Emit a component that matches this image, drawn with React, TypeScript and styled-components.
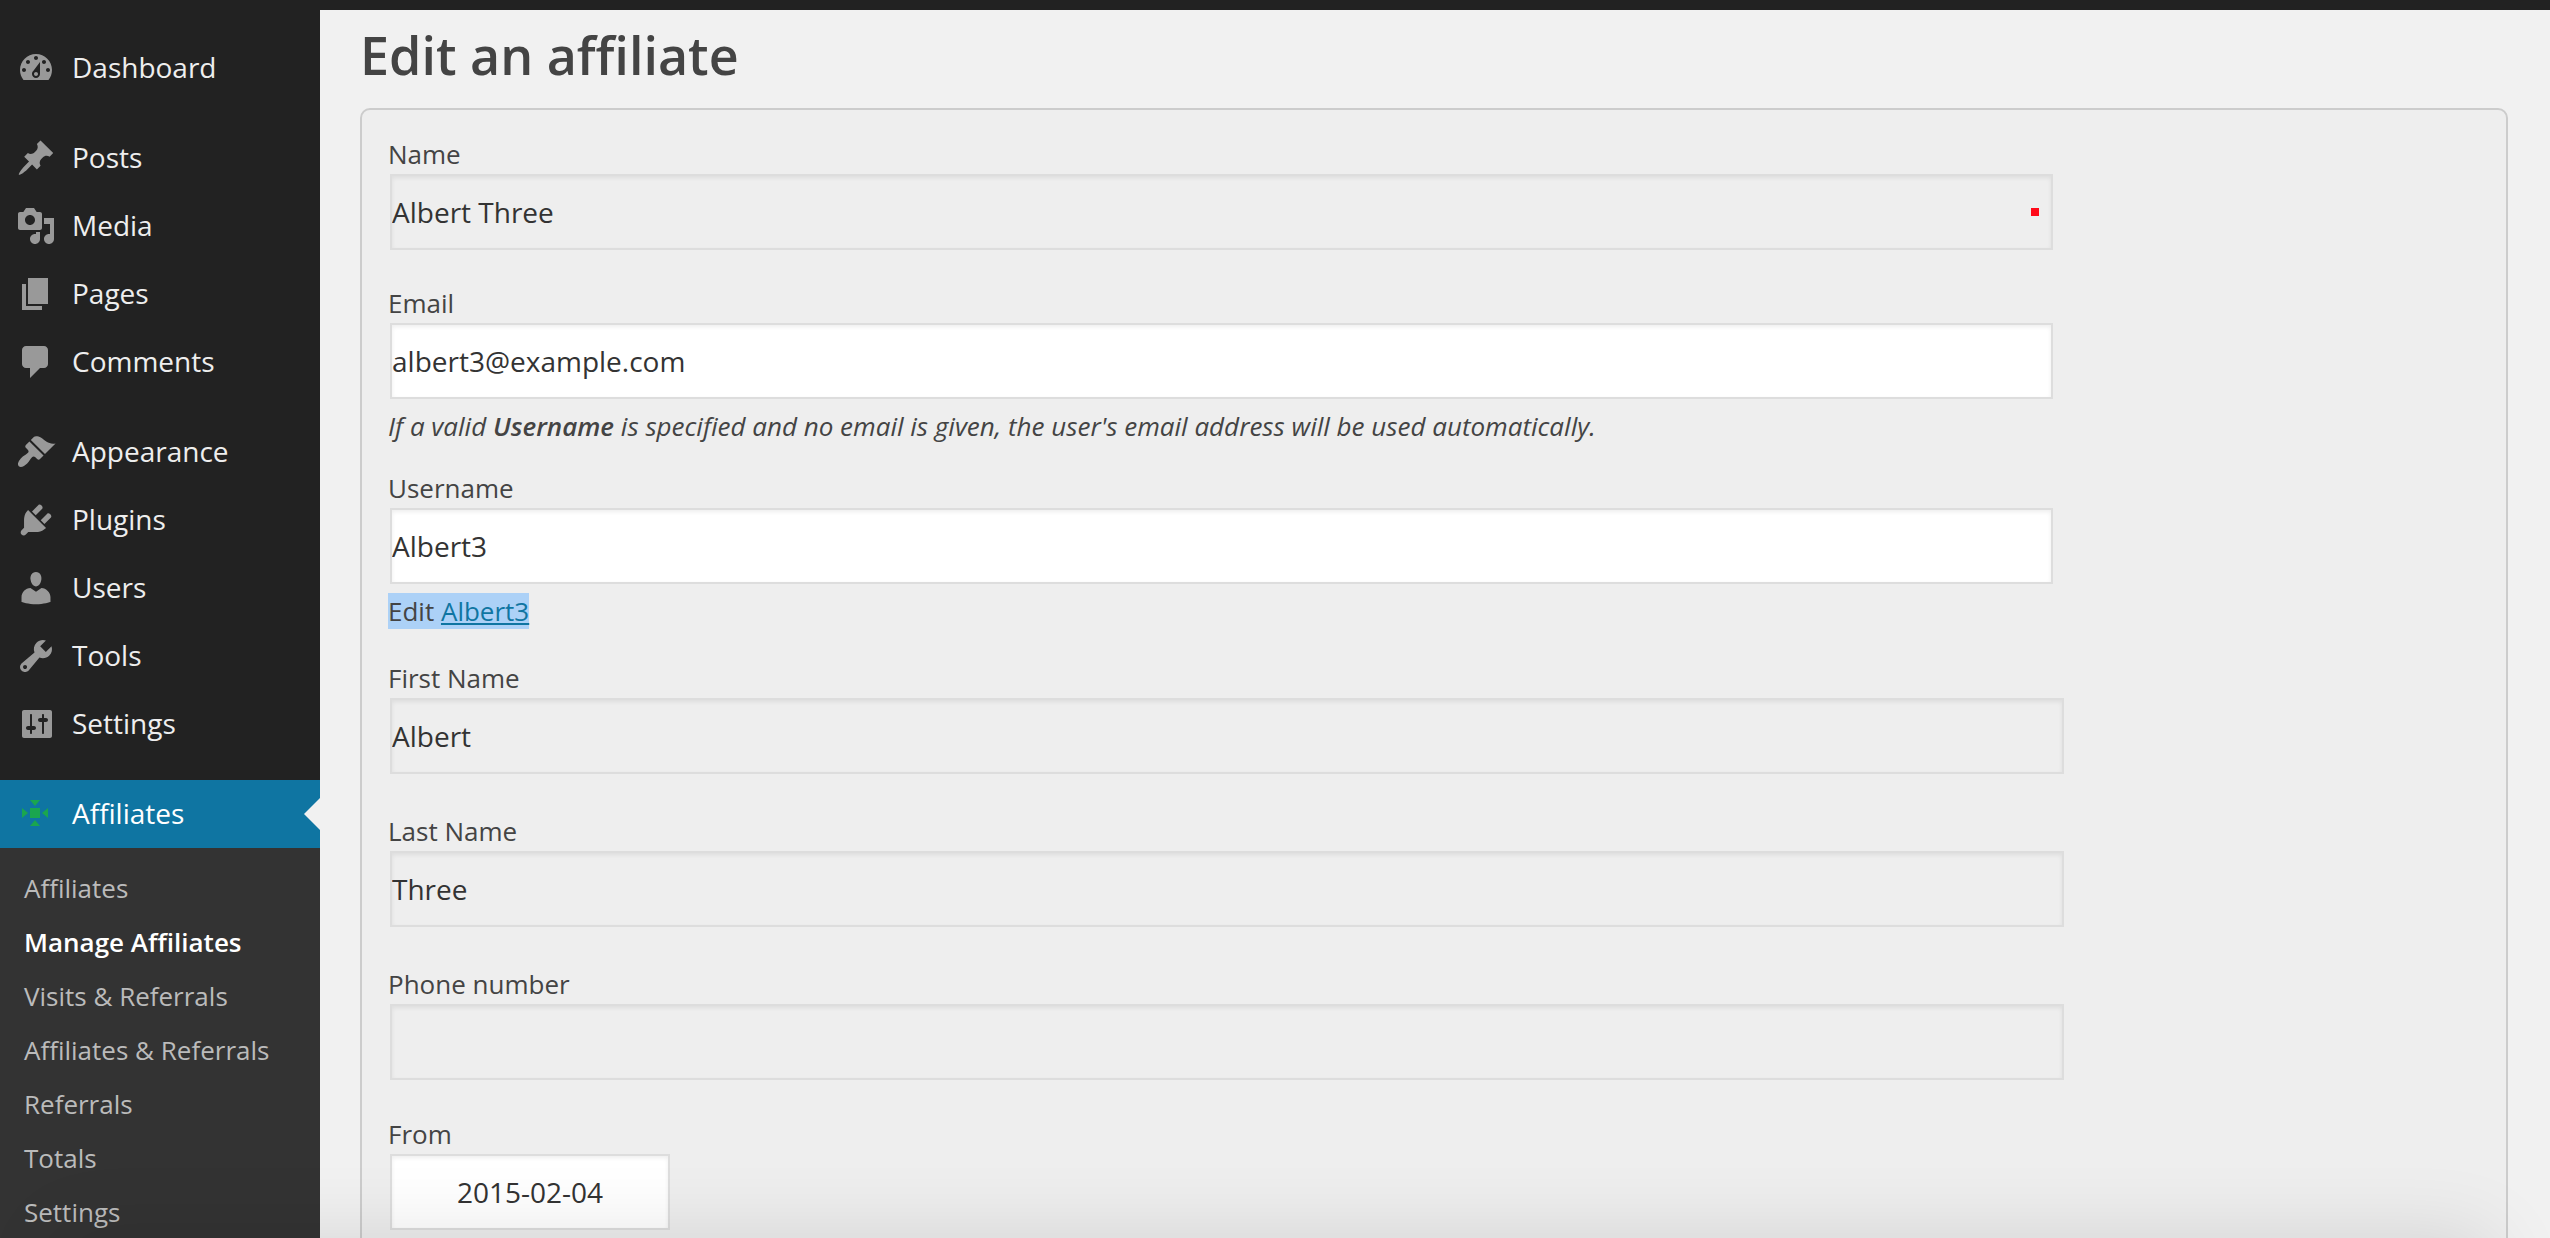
import React from "react";
import styled, { createGlobalStyle, css } from "styled-components";

const GlobalStyle = createGlobalStyle`
  *, *::before, *::after { box-sizing: border-box; }
  html, body { margin: 0; height: 100%; }
  body {
    background: #f1f1f1;
    color: #444;
    font-family: "Open Sans", "Liberation Sans", sans-serif;
    font-size: 26px;
    line-height: 36px;
    overflow: hidden;
  }
  #root { height: 100%; }
`;

const Page = styled.div`
  display: flex;
  flex-direction: column;
  height: 100vh;
  overflow: hidden;
`;

const TopBar = styled.header`
  flex: none;
  height: 10px;
  background: #222;
`;

const Body = styled.div`
  display: flex;
  flex: 1;
  min-height: 0;
`;

const Sidebar = styled.nav`
  flex: none;
  display: flex;
  flex-direction: column;
  width: 320px;
  padding-top: 24px;
  background: #222;
`;

const MenuList = styled.ul`
  display: flex;
  flex-direction: column;
  margin: 0 0 22px;
  padding: 0;
  list-style: none;
`;

const MenuLink = styled.a<{ $current?: boolean }>`
  position: relative;
  display: flex;
  align-items: flex-start;
  gap: 16px;
  padding: 14px 16px;
  font-size: 28px;
  line-height: 38px;
  color: #eee;
  text-decoration: none;

  ${({ $current }) =>
    $current &&
    css`
      background: #0f75a2;
      color: #fff;

      &::after {
        content: "";
        position: absolute;
        right: 0;
        top: 18px;
        border: 16px solid transparent;
        border-left-width: 0;
        border-right-color: #f1f1f1;
      }
    `}
`;

const MenuIcon = styled.svg`
  flex: none;
  width: 40px;
  height: 40px;
  fill: #999;
`;

const SubMenu = styled.ul`
  flex: 1;
  margin: -22px 0 0;
  padding: 13px 0;
  list-style: none;
  background: #333;
`;

const SubLink = styled.a<{ $current?: boolean }>`
  display: block;
  padding: 9px 24px;
  font-size: 26px;
  line-height: 36px;
  white-space: nowrap;
  text-decoration: none;
  color: ${({ $current }) => ($current ? "#fff" : "#bbb")};
  font-weight: ${({ $current }) => ($current ? 600 : 400)};
`;

const Main = styled.main`
  flex: 1;
  min-width: 0;
  padding: 11px 42px 0 40px;
`;

const Title = styled.h1`
  margin: 0 0 19px;
  font-size: 52px;
  line-height: 68px;
  font-weight: 600;
`;

const Panel = styled.form`
  min-height: 100vh;
  padding: 26px;
  border: 2px solid #ccc;
  border-radius: 10px;
  background: #eee;
`;

const Field = styled.div<{ $gap: number }>`
  margin-bottom: ${({ $gap }) => $gap}px;
`;

const Label = styled.label`
  display: block;
`;

const TextInput = styled.input<{ $width?: string; $plain?: boolean; $centered?: boolean }>`
  display: block;
  width: ${({ $width }) => $width ?? "80%"};
  height: 76px;
  margin: 2px 2px 0;
  padding: 0;
  border: 2px solid #ddd;
  border-radius: 0;
  outline: none;
  background-color: ${({ $plain }) => ($plain ? "transparent" : "#fff")};
  box-shadow: inset 0 2px 4px rgba(0, 0, 0, 0.07);
  color: #333;
  font-family: inherit;
  font-size: 28px;
  text-align: ${({ $centered }) => ($centered ? "center" : "left")};

  &:required {
    background-image: linear-gradient(#ff0a19, #ff0a19);
    background-repeat: no-repeat;
    background-position: right 12px center;
    background-size: 8px 8px;
  }
`;

const Hint = styled.div<{ $italic?: boolean }>`
  padding-top: 9px;
  font-style: ${({ $italic }) => ($italic ? "italic" : "normal")};

  strong {
    font-weight: 600;
  }
`;

const Selected = styled.span`
  display: inline-block;
  vertical-align: top;
  background: #acd1f7;
`;

const ProfileLink = styled.a`
  color: #0f75a2;
  text-decoration: underline;
`;

const BottomShade = styled.div`
  position: fixed;
  top: 100%;
  left: 60px;
  right: 60px;
  height: 100px;
  box-shadow: 0 0 80px rgba(0, 0, 0, 0.12);
  pointer-events: none;
`;

const icons = {
  dashboard:
    "M3.76 16h12.48c1.1-1.37 1.76-3.11 1.76-5 0-4.42-3.58-8-8-8s-8 3.58-8 8c0 1.89.66 3.63 1.76 5zM10 4c.55 0 1 .45 1 1s-.45 1-1 1-1-.45-1-1 .45-1 1-1zM6 6c.55 0 1 .45 1 1s-.45 1-1 1-1-.45-1-1 .45-1 1-1zm8 0c.55 0 1 .45 1 1s-.45 1-1 1-1-.45-1-1 .45-1 1-1zm-5.37 5.55L12 7v6c0 1.1-.9 2-2 2s-2-.9-2-2c0-.57.24-1.08.63-1.45zM4 10c.55 0 1 .45 1 1s-.45 1-1 1-1-.45-1-1 .45-1 1-1zm12 0c.55 0 1 .45 1 1s-.45 1-1 1-1-.45-1-1 .45-1 1-1zm-5 3c0-.55-.45-1-1-1s-1 .45-1 1 .45 1 1 1 1-.45 1-1z",
  posts:
    "M10.44 3.02l1.82-1.82 6.36 6.35-1.83 1.82c-1.05-.68-2.48-.57-3.41.36l-.75.75c-.92.93-1.04 2.35-.35 3.41l-1.83 1.82-2.41-2.41-2.8 2.79c-.42.42-3.38 2.71-3.8 2.29s1.86-3.39 2.28-3.81l2.79-2.79L4.1 9.36l1.83-1.82c1.05.69 2.48.57 3.4-.36l.75-.75c.93-.92 1.05-2.35.36-3.41z",
  media:
    "M13 11V4c0-.55-.45-1-1-1h-1.67L9 1H5L3.67 3H2c-.55 0-1 .45-1 1v7c0 .55.45 1 1 1h10c.55 0 1-.45 1-1zM7 4.5c1.38 0 2.5 1.12 2.5 2.5S8.38 9.5 7 9.5 4.5 8.38 4.5 7 5.62 4.5 7 4.5zM14 6h5v10.5c0 1.38-1.12 2.5-2.5 2.5S14 17.88 14 16.5s1.12-2.5 2.5-2.5c.17 0 .34.02.5.05V9h-3V6zm-4 8.05V13h2v3.5c0 1.38-1.12 2.5-2.5 2.5S7 17.88 7 16.5 8.12 14 9.5 14c.17 0 .34.02.5.05z",
  pages: "M6 15V2h10v13H6zm-1 1h8v2H3V5h2v11z",
  comments:
    "M5 2h9q.82 0 1.41.59T16 4v7q0 .82-.59 1.41T14 13h-2l-5 5v-5H5q-.82 0-1.41-.59T3 11V4q0-.82.59-1.41T5 2z",
  appearance:
    "M14.48 11.06L7.41 3.99l1.5-1.5c.5-.56 2.3-.47 3.51.32 1.21.8 1.43 1.28 2.91 2.1 1.18.64 2.45 1.26 4.45.85zm-.71.71L6.7 4.7 4.93 6.47c-.39.39-.39 1.02 0 1.41l1.06 1.06c.39.39.39 1.03 0 1.42-.6.6-1.43 1.11-2.21 1.69-.35.26-.7.53-1.01.84C1.43 14.23.4 16.08 1.4 17.07c.99 1 2.84-.03 4.18-1.36.31-.31.58-.66.85-1.02.57-.78 1.08-1.61 1.69-2.21.39-.39 1.02-.39 1.41 0l1.06 1.06c.39.39 1.02.39 1.41 0z",
  plugins:
    "M13.11 4.36L9.87 7.6 8 5.73l3.24-3.24c.35-.34 1.05-.2 1.56.32.52.51.66 1.21.31 1.55zm-8 1.77l.91-1.12 9.01 9.01-1.19.84c-.71.71-2.63 1.16-3.82 1.16H6.14L4.9 17.26c-.59.59-1.54.59-2.12 0-.59-.58-.59-1.53 0-2.12l1.24-1.24v-3.88c0-1.13.4-3.19 1.09-3.89zm7.26 3.97l3.24-3.24c.34-.35 1.04-.21 1.55.31.52.51.66 1.21.31 1.55l-3.24 3.25z",
  users:
    "M10 9.25c-2.27 0-2.73-3.44-2.73-3.44C7 4.02 7.82 2 9.97 2c2.16 0 2.98 2.02 2.71 3.81 0 0-.41 3.44-2.68 3.44zm0 2.57L12.72 10c2.39 0 4.52 2.33 4.52 4.53v2.49s-3.65 1.13-7.24 1.13c-3.65 0-7.24-1.13-7.24-1.13v-2.49c0-2.25 1.94-4.48 4.47-4.48z",
  tools:
    "M16.68 9.77c-1.34 1.34-3.3 1.67-4.95.99l-5.41 6.52c-.99.99-2.59.99-3.58 0s-.99-2.59 0-3.57l6.52-5.42c-.68-1.65-.35-3.61.99-4.95 1.28-1.28 3.12-1.62 4.72-1.06l-2.89 2.89 2.82 2.82 2.86-2.87c.53 1.58.18 3.39-1.08 4.65zM3.81 16.21c.4.39 1.04.39 1.43 0 .4-.4.4-1.04 0-1.43-.39-.4-1.03-.4-1.43 0-.39.39-.39 1.03 0 1.43z",
  settings:
    "M18 16V4c0-.55-.45-1-1-1H4c-.55 0-1 .45-1 1v12c0 .55.45 1 1 1h13c.55 0 1-.45 1-1zM8 11h1c.55 0 1 .45 1 1s-.45 1-1 1H8v1.5c0 .28-.22.5-.5.5s-.5-.22-.5-.5V13H6c-.55 0-1-.45-1-1s.45-1 1-1h1V5.5c0-.28.22-.5.5-.5s.5.22.5.5V11zm5-2h-1c-.55 0-1-.45-1-1s.45-1 1-1h1V5.5c0-.28.22-.5.5-.5s.5.22.5.5V7h1c.55 0 1 .45 1 1s-.45 1-1 1h-1v5.5c0 .28-.22.5-.5.5s-.5-.22-.5-.5V9z",
};

type IconName = keyof typeof icons;

const menuGroups: { icon: IconName; label: string }[][] = [
  [{ icon: "dashboard", label: "Dashboard" }],
  [
    { icon: "posts", label: "Posts" },
    { icon: "media", label: "Media" },
    { icon: "pages", label: "Pages" },
    { icon: "comments", label: "Comments" },
  ],
  [
    { icon: "appearance", label: "Appearance" },
    { icon: "plugins", label: "Plugins" },
    { icon: "users", label: "Users" },
    { icon: "tools", label: "Tools" },
    { icon: "settings", label: "Settings" },
  ],
];

const subItems = [
  "Affiliates",
  "Manage Affiliates",
  "Visits & Referrals",
  "Affiliates & Referrals",
  "Referrals",
  "Totals",
  "Settings",
];

const accountWidth = "calc(80% - 11px)";

function AffiliatesIcon() {
  return (
    <MenuIcon viewBox="0 0 40 40" aria-hidden="true">
      <g fill="#1aa64f">
        <path d="M14 14h10v10H14z" />
        <path d="M14 6h10l-5 6z" />
        <path d="M14 32h10l-5-6z" />
        <path d="M6 14v10l6-5z" />
        <path d="M32 14v10l-6-5z" />
      </g>
    </MenuIcon>
  );
}

export default function App() {
  return (
    <Page>
      <GlobalStyle />
      <TopBar />
      <Body>
        <Sidebar aria-label="Main menu">
          {menuGroups.map((group) => (
            <MenuList key={group[0].label}>
              {group.map((item) => (
                <li key={item.label}>
                  <MenuLink href="#">
                    <MenuIcon viewBox="0 0 20 20" aria-hidden="true">
                      <path fillRule="evenodd" d={icons[item.icon]} />
                    </MenuIcon>
                    {item.label}
                  </MenuLink>
                </li>
              ))}
            </MenuList>
          ))}
          <MenuList>
            <li>
              <MenuLink href="#" $current>
                <AffiliatesIcon />
                Affiliates
              </MenuLink>
            </li>
          </MenuList>
          <SubMenu>
            {subItems.map((label) => (
              <li key={label}>
                <SubLink href="#" $current={label === "Manage Affiliates"}>
                  {label}
                </SubLink>
              </li>
            ))}
          </SubMenu>
        </Sidebar>
        <Main>
          <Title>Edit an affiliate</Title>
          <Panel>
            <Field $gap={35}>
              <Label htmlFor="name">Name</Label>
              <TextInput id="name" $plain $width={accountWidth} defaultValue="Albert Three" readOnly required />
            </Field>
            <Field $gap={26}>
              <Label htmlFor="email">Email</Label>
              <TextInput id="email" $width={accountWidth} defaultValue="albert3@example.com" />
              <Hint $italic>
                If a valid <strong>Username</strong> is specified and no email is given, the user's email address
                will be used automatically.
              </Hint>
            </Field>
            <Field $gap={31}>
              <Label htmlFor="username">Username</Label>
              <TextInput id="username" $width={accountWidth} defaultValue="Albert3" />
              <Hint>
                <Selected>
                  Edit <ProfileLink href="#">Albert3</ProfileLink>
                </Selected>
              </Hint>
            </Field>
            <Field $gap={39}>
              <Label htmlFor="first-name">First Name</Label>
              <TextInput id="first-name" $plain defaultValue="Albert" readOnly />
            </Field>
            <Field $gap={39}>
              <Label htmlFor="last-name">Last Name</Label>
              <TextInput id="last-name" $plain defaultValue="Three" readOnly />
            </Field>
            <Field $gap={36}>
              <Label htmlFor="phone">Phone number</Label>
              <TextInput id="phone" $plain readOnly />
            </Field>
            <Field $gap={36}>
              <Label htmlFor="from">From</Label>
              <TextInput id="from" $width="280px" $centered defaultValue="2015-02-04" />
            </Field>
          </Panel>
        </Main>
      </Body>
      <BottomShade />
    </Page>
  );
}
